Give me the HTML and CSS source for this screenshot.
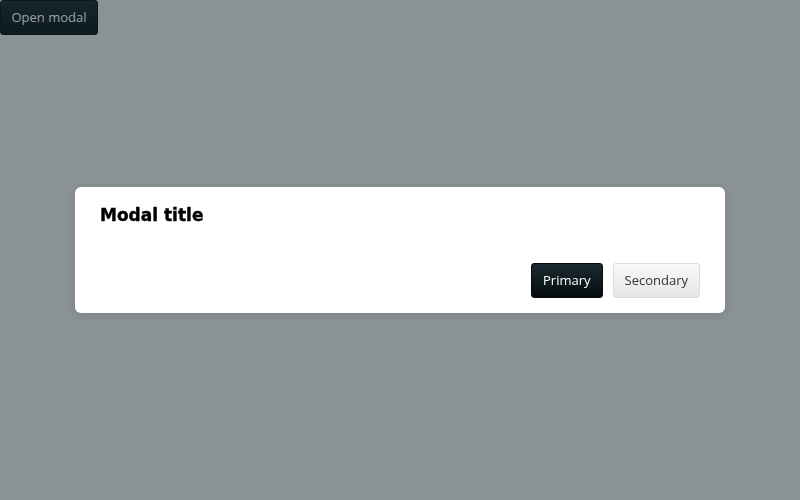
FILE: index.html
```html
<!DOCTYPE html>
<html>
<head>
<meta charset="utf-8">
<link rel="stylesheet" href="styles.css">
</head>
<body>
<button class="btn btn-open">Open modal</button>
<div class="backdrop">
  <div class="modal">
    <h2 class="modal-title">Modal title</h2>
    <div class="modal-footer">
      <button class="btn btn-primary">Primary</button>
      <button class="btn btn-secondary">Secondary</button>
    </div>
  </div>
</div>
</body>
</html>
```
FILE: styles.css
```css
html, body {
  margin: 0;
  padding: 0;
  width: 800px;
  height: 500px;
  background: #8a9295;
  font-family: "Open Sans", sans-serif;
  overflow: hidden;
}
.btn {
  font-family: "Open Sans", sans-serif;
  font-size: 13px;
  height: 35px;
  padding: 0 11px 2px;
  border-radius: 3px;
  cursor: pointer;
  box-sizing: border-box;
  white-space: nowrap;
}
.btn-open {
  display: block;
  width: 98px;
  padding: 0 0 2px;
  background: linear-gradient(#15262c, #0d1a1e);
  color: #9aa3a6;
  border: 1px solid #0d181c;
}
.backdrop {
  position: fixed;
  inset: 0;
  display: flex;
  align-items: center;
  justify-content: center;
}
.modal {
  width: 650px;
  box-sizing: border-box;
  background: #fff;
  border-radius: 6px;
  padding: 16px 25px 15px;
  box-shadow: 0 2px 8px rgba(0,0,0,0.12);
}
.modal-title {
  margin: 0;
  font-family: "DejaVu Sans", sans-serif;
  font-weight: 700;
  font-size: 17px;
  line-height: 24px;
  color: #000;
  -webkit-text-stroke: 0.4px #000;
}
.modal-footer {
  margin-top: 36px;
  display: flex;
  justify-content: flex-end;
  gap: 10px;
}
.btn-primary {
  background: linear-gradient(#1b2b31, #050b0d);
  color: #fff;
  border: 1px solid #050b0d;
}
.btn-secondary {
  background: linear-gradient(#f9f9f9, #e6e6e6);
  color: #333;
  border: 1px solid #dcdcdc;
}
```
